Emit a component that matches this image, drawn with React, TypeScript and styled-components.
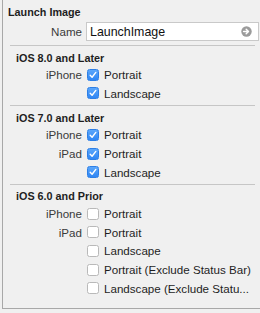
import React from 'react';
import styled, { createGlobalStyle } from 'styled-components';

const GlobalStyle = createGlobalStyle`
  html, body {
    margin: 0;
    padding: 0;
    background: #f0f0f0;
  }
  body {
    font-family: "Liberation Sans", Arial, sans-serif;
    font-size: 11.6px;
    color: #1e1e1e;
  }
`;

const Panel = styled.div`
  margin-left: 2px;
  width: 258px;
  height: 309px;
  border-left: 1px solid #a8a8a8;
  border-bottom: 1px solid #a8a8a8;
  box-sizing: border-box;
  background: #f0f0f0;
  display: flex;
  flex-direction: column;
`;

const TopTitle = styled.div`
  font-weight: bold;
  font-size: 10.8px;
  line-height: 14px;
  padding: 5px 0 0 5px;
  height: 17px;
`;

const NameRow = styled.div`
  display: flex;
  align-items: center;
  height: 19px;
  margin-bottom: 1.5px;
`;

const Label = styled.div`
  width: 79px;
  text-align: right;
  color: #3a3a3a;
  flex-shrink: 0;
`;

const Field = styled.div`
  margin-left: 4px;
  flex: 1;
  margin-right: 1px;
  height: 19px;
  box-sizing: border-box;
  border: 1px solid #c9c9c9;
  background: #ffffff;
  display: flex;
  align-items: center;
  padding: 0 6px 0 3px;
  font-size: 12.4px;
  color: #111;
`;

const FieldText = styled.span`
  flex: 1;
`;

const Divider = styled.div`
  height: 1px;
  background: #c6c6c6;
  margin: 2.5px 5px 0 7px;
`;

const Section = styled.div`
  display: flex;
  flex-direction: column;
`;

const SectionTitle = styled.div`
  font-weight: bold;
  font-size: 10.8px;
  line-height: 14px;
  margin-top: 4.5px;
  padding-left: 13px;
  height: 15px;
`;

const Row = styled.div`
  display: flex;
  align-items: center;
  height: 18.6px;
`;

const Box = styled.span<{ $checked: boolean }>`
  width: 12px;
  height: 12px;
  box-sizing: border-box;
  margin-left: 5px;
  border-radius: 2.5px;
  flex-shrink: 0;
  display: flex;
  align-items: center;
  justify-content: center;
  background: ${p => (p.$checked ? 'linear-gradient(#5aa6fb, #2f86f4)' : '#ffffff')};
  border: 1px solid ${p => (p.$checked ? '#2d7fe6' : '#b9b9b9')};
`;

const OptionText = styled.span`
  margin-left: 5px;
  white-space: nowrap;
  color: #1e1e1e;
`;

const Check = () => (
  <svg width="8" height="8" viewBox="0 0 8 8">
    <path d="M1.2 4.2 L3.1 6.2 L6.8 1.4" fill="none" stroke="#fff" strokeWidth="1.4" strokeLinecap="round" strokeLinejoin="round" />
  </svg>
);

const ArrowIcon = () => (
  <svg width="11" height="11" viewBox="0 0 11 11">
    <circle cx="5.5" cy="5.5" r="5.2" fill="#9b9b9b" />
    <path d="M2.6 5.5 H7.2 M5.2 3.3 L7.5 5.5 L5.2 7.7" fill="none" stroke="#fff" strokeWidth="1.5" strokeLinecap="round" strokeLinejoin="round" />
  </svg>
);

type Option = { label?: string; text: string; checked: boolean };

const sections: { title: string; options: Option[] }[] = [
  {
    title: 'iOS 8.0 and Later',
    options: [
      { label: 'iPhone', text: 'Portrait', checked: true },
      { text: 'Landscape', checked: true },
    ],
  },
  {
    title: 'iOS 7.0 and Later',
    options: [
      { label: 'iPhone', text: 'Portrait', checked: true },
      { label: 'iPad', text: 'Portrait', checked: true },
      { text: 'Landscape', checked: true },
    ],
  },
  {
    title: 'iOS 6.0 and Prior',
    options: [
      { label: 'iPhone', text: 'Portrait', checked: false },
      { label: 'iPad', text: 'Portrait', checked: false },
      { text: 'Landscape', checked: false },
      { text: 'Portrait (Exclude Status Bar)', checked: false },
      { text: 'Landscape (Exclude Statu...', checked: false },
    ],
  },
];

export default function App() {
  return (
    <>
      <GlobalStyle />
      <Panel>
        <TopTitle>Launch Image</TopTitle>
        <NameRow>
          <Label>Name</Label>
          <Field>
            <FieldText>LaunchImage</FieldText>
            <ArrowIcon />
          </Field>
        </NameRow>
        {sections.map(s => (
          <Section key={s.title}>
            <Divider />
            <SectionTitle>{s.title}</SectionTitle>
            {s.options.map((o, i) => (
              <Row key={i}>
                <Label>{o.label ?? ''}</Label>
                <Box $checked={o.checked}>{o.checked && <Check />}</Box>
                <OptionText>{o.text}</OptionText>
              </Row>
            ))}
          </Section>
        ))}
      </Panel>
    </>
  );
}
